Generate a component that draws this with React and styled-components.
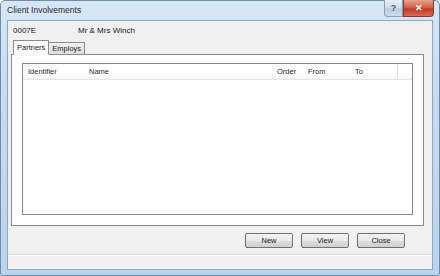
import styled, { createGlobalStyle } from "styled-components";

const Global = createGlobalStyle`
  html, body { margin: 0; padding: 0; background: #fff; }
  body { font-family: "Liberation Sans", Arial, sans-serif; font-size: 8px; color: #1a1a1a; }
`;

const Window = styled.div`
  width: 440px;
  height: 276px;
  box-sizing: border-box;
  display: flex;
  flex-direction: column;
  background: linear-gradient(180deg, #d9e6f4 0%, #c9dcf0 30%, #bcd3ec 100%);
  border: 1px solid #6d8db3;
  border-radius: 5px 5px 2px 2px;
  padding: 0 6px 5px 6px;
`;

const TitleBar = styled.div`
  height: 19px;
  display: flex;
  align-items: center;
  justify-content: space-between;
`;

const Title = styled.span`
  font-size: 8.5px;
  color: #1e2c3c;
  margin-top: -1px;
`;

const Caption = styled.div`
  display: flex;
  align-self: flex-start;
  margin-top: -1px;
  margin-right: -1px;
`;

const CapButton = styled.div`
  width: ${(p) => p.$w}px;
  height: 17px;
  box-sizing: border-box;
  display: flex;
  align-items: center;
  justify-content: center;
  border: 1px solid ${(p) => (p.$red ? "#8a3a2c" : "#8aa0b8")};
  border-top: none;
  background: ${(p) =>
    p.$red
      ? "linear-gradient(180deg,#e8a493 0%,#d4583f 50%,#c23b22 55%,#d66a4f 100%)"
      : "linear-gradient(180deg,#e6eef7 0%,#cfdcea 50%,#bccbdc 55%,#cddbea 100%)"};
  border-radius: ${(p) => (p.$red ? "0 0 4px 0" : "0 0 0 4px")};
  color: ${(p) => (p.$red ? "#fff" : "#4b5d70")};
  font-size: 9px;
  font-weight: bold;
`;

const Client = styled.div`
  flex: 1;
  background: #f0f0f0;
  border: 1px solid #8fa6c0;
  display: flex;
  flex-direction: column;
`;

const Body = styled.div`
  display: flex;
  flex-direction: column;
  padding: 3px 8px 0 3px;
`;

const InfoRow = styled.div`
  display: flex;
  height: 12px;
  align-items: center;
  padding-left: 2px;
`;

const InfoCell = styled.span`
  width: ${(p) => p.$w}px;
`;

const Tabs = styled.div`
  display: flex;
  align-items: flex-end;
  margin-top: 3px;
  padding-left: 2px;
  height: 15px;
  position: relative;
  z-index: 1;
`;

const Tab = styled.div`
  height: ${(p) => (p.$active ? 15 : 12)}px;
  box-sizing: border-box;
  padding: 0 3px;
  display: flex;
  align-items: center;
  border: 1px solid #8c8c8c;
  border-bottom: ${(p) => (p.$active ? "1px solid #fff" : "none")};
  margin-left: ${(p) => (p.$active ? 0 : -1)}px;
  background: ${(p) => (p.$active ? "#fff" : "linear-gradient(180deg,#f2f2f2,#dcdcdc)")};
  margin-bottom: ${(p) => (p.$active ? -1 : 0)}px;
  font-size: 7.5px;
`;

const Panel = styled.div`
  height: 172px;
  box-sizing: border-box;
  background: #fff;
  border: 1px solid #8c8c8c;
  padding: 8px 10px 10px 10px;
  display: flex;
`;

const List = styled.div`
  flex: 1;
  border: 1px solid #828790;
  display: flex;
  flex-direction: column;
  background: #fff;
`;

const Header = styled.div`
  display: flex;
  height: 15px;
  border-bottom: 1px solid #e5e5e5;
  background: linear-gradient(180deg, #ffffff 0%, #ffffff 50%, #f4f5f7 100%);
`;

const Col = styled.div`
  width: ${(p) => p.$w}px;
  flex: ${(p) => (p.$w ? "none" : 1)};
  box-sizing: border-box;
  padding-left: 5px;
  display: flex;
  align-items: center;
  border-right: 1px solid ${(p) => (p.$edge ? "#e2e3e5" : "transparent")};
  font-size: 7.5px;
  color: #2b2b2b;
`;

const Footer = styled.div`
  display: flex;
  justify-content: flex-end;
  gap: 8px;
  padding: 7px 19px 0 0;
`;

const Button = styled.button`
  width: ${(p) => p.$w}px;
  height: 15px;
  padding: 0;
  border: 1px solid #707070;
  border-radius: 2px;
  background: linear-gradient(180deg, #f2f2f2 0%, #ebebeb 50%, #dddddd 51%, #cfcfcf 100%);
  font-family: inherit;
  font-size: 7.5px;
  color: #1a1a1a;
`;

const StatusLine = styled.div`
  height: 14px;
  margin-top: auto;
  border-top: 1px solid #d6d6d6;
  box-shadow: inset 0 1px 0 #fff;
`;

export default function App() {
  return (
    <>
      <Global />
      <Window>
        <TitleBar>
          <Title>Client Involvements</Title>
          <Caption>
            <CapButton $w={19}>?</CapButton>
            <CapButton $w={31} $red>
              ✕
            </CapButton>
          </Caption>
        </TitleBar>
        <Client>
          <Body>
            <InfoRow>
              <InfoCell $w={65}>0007E</InfoCell>
              <InfoCell>Mr &amp; Mrs Winch</InfoCell>
            </InfoRow>
            <Tabs>
              <Tab $active>Partners</Tab>
              <Tab>Employs</Tab>
            </Tabs>
            <Panel>
              <List>
                <Header>
                  <Col $w={61}>Identifier</Col>
                  <Col $w={188}>Name</Col>
                  <Col $w={31}>Order</Col>
                  <Col $w={47}>From</Col>
                  <Col $w={48} $edge>
                    To
                  </Col>
                  <Col />
                </Header>
              </List>
            </Panel>
            <Footer>
              <Button $w={48}>New</Button>
              <Button $w={48}>View</Button>
              <Button $w={48}>Close</Button>
            </Footer>
          </Body>
          <StatusLine />
        </Client>
      </Window>
    </>
  );
}
